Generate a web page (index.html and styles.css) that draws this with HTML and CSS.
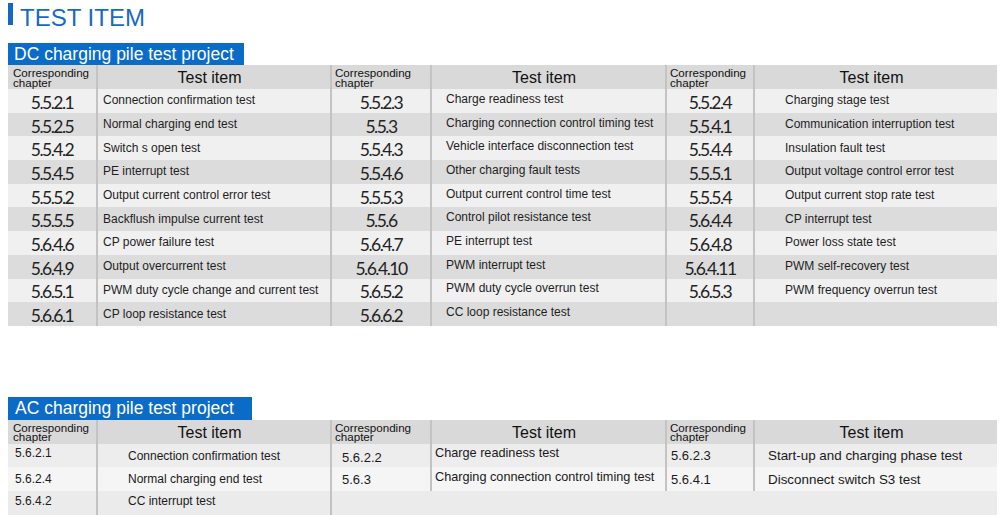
FILE: index.html
```html
<!DOCTYPE html>
<html lang="en">
<head>
<meta charset="utf-8">
<title>Test item</title>
<link rel="stylesheet" href="styles.css">
</head>
<body>
<div class="page">
  <div class="title"><span class="title-bar"></span><h1 class="title-text">TEST ITEM</h1></div>

  <div class="sec-head dc-head">DC charging pile test project</div>
  <div class="tbl dc">
    <div class="row head">
      <div class="c hc">Corresponding<br>chapter</div><div class="c ht">Test item</div>
      <div class="c hc">Corresponding<br>chapter</div><div class="c ht">Test item</div>
      <div class="c hc">Corresponding<br>chapter</div><div class="c ht">Test item</div>
    </div>
    <div class="row light">
      <div class="c ch">5.5.2.1</div><div class="c it i2">Connection confirmation test</div>
      <div class="c ch">5.5.2.3</div><div class="c it i4">Charge readiness test</div>
      <div class="c ch">5.5.2.4</div><div class="c it i6">Charging stage test</div>
    </div>
    <div class="row dark">
      <div class="c ch">5.5.2.5</div><div class="c it i2">Normal charging end test</div>
      <div class="c ch">5.5.3</div><div class="c it i4">Charging connection control timing test</div>
      <div class="c ch">5.5.4.1</div><div class="c it i6">Communication interruption test</div>
    </div>
    <div class="row light">
      <div class="c ch">5.5.4.2</div><div class="c it i2">Switch s open test</div>
      <div class="c ch">5.5.4.3</div><div class="c it i4">Vehicle interface disconnection test</div>
      <div class="c ch">5.5.4.4</div><div class="c it i6">Insulation fault test</div>
    </div>
    <div class="row dark">
      <div class="c ch">5.5.4.5</div><div class="c it i2">PE interrupt test</div>
      <div class="c ch">5.5.4.6</div><div class="c it i4">Other charging fault tests</div>
      <div class="c ch">5.5.5.1</div><div class="c it i6">Output voltage control error test</div>
    </div>
    <div class="row light">
      <div class="c ch">5.5.5.2</div><div class="c it i2">Output current control error test</div>
      <div class="c ch">5.5.5.3</div><div class="c it i4">Output current control time test</div>
      <div class="c ch">5.5.5.4</div><div class="c it i6">Output current stop rate test</div>
    </div>
    <div class="row dark">
      <div class="c ch">5.5.5.5</div><div class="c it i2">Backflush impulse current test</div>
      <div class="c ch">5.5.6</div><div class="c it i4">Control pilot resistance test</div>
      <div class="c ch">5.6.4.4</div><div class="c it i6">CP interrupt test</div>
    </div>
    <div class="row light">
      <div class="c ch">5.6.4.6</div><div class="c it i2">CP power failure test</div>
      <div class="c ch">5.6.4.7</div><div class="c it i4">PE interrupt test</div>
      <div class="c ch">5.6.4.8</div><div class="c it i6">Power loss state test</div>
    </div>
    <div class="row dark">
      <div class="c ch">5.6.4.9</div><div class="c it i2">Output overcurrent test</div>
      <div class="c ch">5.6.4.10</div><div class="c it i4">PWM interrupt test</div>
      <div class="c ch">5.6.4.11</div><div class="c it i6">PWM self-recovery test</div>
    </div>
    <div class="row light">
      <div class="c ch">5.6.5.1</div><div class="c it i2">PWM duty cycle change and current test</div>
      <div class="c ch">5.6.5.2</div><div class="c it i4">PWM duty cycle overrun test</div>
      <div class="c ch">5.6.5.3</div><div class="c it i6">PWM frequency overrun test</div>
    </div>
    <div class="row dark">
      <div class="c ch">5.6.6.1</div><div class="c it i2">CP loop resistance test</div>
      <div class="c ch">5.6.6.2</div><div class="c it i4">CC loop resistance test</div>
      <div class="c ch"></div><div class="c it i6"></div>
    </div>
  </div>

  <div class="sec-head ac-head">AC charging pile test project</div>
  <div class="tbl ac">
    <div class="row head">
      <div class="c hc">Corresponding<br>chapter</div><div class="c ht">Test item</div>
      <div class="c hc">Corresponding<br>chapter</div><div class="c ht">Test item</div>
      <div class="c hc">Corresponding<br>chapter</div><div class="c ht">Test item</div>
    </div>
    <div class="row ac1">
      <div class="c a1 up">5.6.2.1</div><div class="c a2">Connection confirmation test</div>
      <div class="c a3 down">5.6.2.2</div><div class="c a4 up">Charge readiness test</div>
      <div class="c a5">5.6.2.3</div><div class="c a6">Start-up and charging phase test</div>
    </div>
    <div class="row ac2">
      <div class="c a1">5.6.2.4</div><div class="c a2">Normal charging end test</div>
      <div class="c a3">5.6.3</div><div class="c a4 up">Charging connection control timing test</div>
      <div class="c a5">5.6.4.1</div><div class="c a6">Disconnect switch S3 test</div>
    </div>
    <div class="row ac3">
      <div class="c a1 up">5.6.4.2</div><div class="c a2 up">CC interrupt test</div>
      <div class="c merged"></div>
    </div>
  </div>
</div>
</body>
</html>
```
FILE: styles.css
```css
* { box-sizing: border-box; }

html, body {
  margin: 0;
  padding: 0;
  background: #ffffff;
}

body {
  font-family: "Liberation Sans", Arial, sans-serif;
  color: #1a1a1a;
}

.page {
  width: 1000px;
  height: 515px;
  padding: 3px 3px 0 8px;
  overflow: hidden;
}

/* Title */
.title {
  display: flex;
  align-items: flex-start;
  height: 40px;
}
.title-bar {
  width: 5px;
  height: 22px;
  background: #1467c2;
}
.title-text {
  margin: 1px 0 0 7px;
  font-weight: normal;
  font-size: 24px;
  line-height: 28px;
  color: #1769c4;
}

/* Section heads */
.sec-head {
  background: #0b6cc8;
  color: #ffffff;
  font-size: 17.5px;
  height: 22px;
  line-height: 22px;
  padding-left: 6px;
}
.dc-head { width: 236px; }
.ac-head { width: 244px; margin-top: 71px; padding-left: 7px; height: 23px; line-height: 23px; }

/* Tables */
.tbl {
  width: 989px;
}
.row {
  display: grid;
  grid-template-columns: 88px 234px 100px 235px 88px 244px;
}
.c {
  display: flex;
  align-items: center;
  white-space: nowrap;
  overflow: hidden;
}
.c + .c {
  border-left: 2px solid #c3c3c3;
}

.head { background: #d9d9d9; height: 24px; }
.dc .row:not(.head) { height: 23.7px; }
.light { background: #f0f0f0; }
.dark { background: #dcdcdc; }

.hc {
  font-size: 11.6px;
  line-height: 9.5px;
  padding: 3px 0 0 3px;
  align-items: flex-start;
  color: #111;
}
.hc:first-child { padding-left: 5px; }
.ht {
  justify-content: center;
  font-size: 16px;
  padding-top: 2px;
  padding-right: 9px;
  color: #111;
}

.ch {
  justify-content: center;
  font-family: Lato, "Open Sans", sans-serif;
  font-size: 17.5px;
  letter-spacing: -1.5px;
  color: #222;
  padding-top: 3px;
}
.it {
  font-size: 12px;
  color: #1e1e1e;
  padding-bottom: 1px;
}
.i2 { padding-left: 5px; }
.i4 { padding-left: 14px; padding-bottom: 4px; }
.i6 { padding-left: 30px; }

/* AC table */
.ac .head { height: 24px; }
.ac .row:not(.head) { height: 23.5px; }
.ac1 { background: #ededed; }
.ac2 { background: #f5f5f5; }
.ac3 { background: #ebebeb; height: 25px !important; }
.ac .c:not(.hc):not(.ht) {
  color: #1a1a1a;
}
.ac .a1 { padding-left: 7px; font-size: 12px; }
.ac .a2 { padding-left: 30px; font-size: 12px; }
.ac .a3 { padding-left: 10px; font-size: 13px; }
.ac .a4 { padding-left: 3px; font-size: 12.7px; }
.ac .a5 { padding-left: 4px; font-size: 13px; }
.ac .a6 { padding-left: 13px; font-size: 13.4px; }
.ac .up { padding-bottom: 5px; }
.ac .down { padding-top: 4px; }
.merged {
  grid-column: 3 / 7;
  background: #ebebeb;
}
```
